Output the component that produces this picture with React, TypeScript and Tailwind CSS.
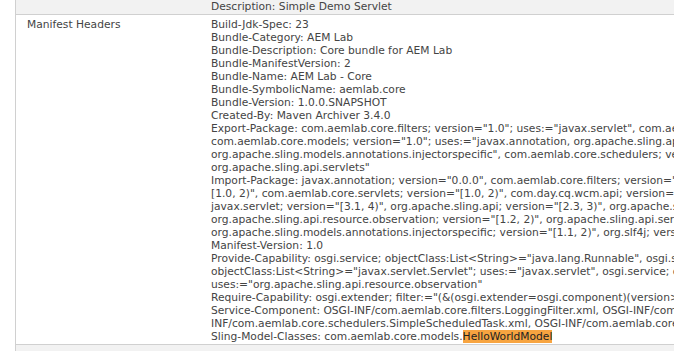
const exportLines = [
	'Export-Package: com.aemlab.core.filters; version="1.0"; uses:="javax.servlet", com.aemlab.core.listeners; version="1.0"; uses:="org.apache.sling.api.resource.observation"',
	'com.aemlab.core.models; version="1.0"; uses:="javax.annotation, org.apache.sling.api.resource, org.apache.sling.models.annotations,',
	'org.apache.sling.models.annotations.injectorspecific", com.aemlab.core.schedulers; version="1.0", com.aemlab.core.servlets; version="1.0"; uses:="javax.servlet,',
	'org.apache.sling.api.servlets"',
];

const importLines = [
	'Import-Package: javax.annotation; version="0.0.0", com.aemlab.core.filters; version="[1.0, 2)", com.aemlab.core.listeners; version=',
	'[1.0, 2)", com.aemlab.core.servlets; version="[1.0, 2)", com.day.cq.wcm.api; version="[1.31, 2)", com.aemlab.core.schedulers;',
	'javax.servlet; version="[3.1, 4)", org.apache.sling.api; version="[2.3, 3)", org.apache.sling.api.resource; version="[2.12, 3)",',
	'org.apache.sling.api.resource.observation; version="[1.2, 2)", org.apache.sling.api.servlets; version="[2.3, 3)",',
	'org.apache.sling.models.annotations.injectorspecific; version="[1.1, 2)", org.slf4j; version="[1.7, 2)"',
];

const provideLines = [
	'Provide-Capability: osgi.service; objectClass:List<String>="java.lang.Runnable", osgi.service; objectClass:List<String>="javax.servlet.Filter";',
	'objectClass:List<String>="javax.servlet.Servlet"; uses:="javax.servlet", osgi.service; objectClass:List<String>="org.apache.sling.api.resource.observation.ResourceChangeListener";',
	'uses:="org.apache.sling.api.resource.observation"',
];

const serviceLines = [
	'Service-Component: OSGI-INF/com.aemlab.core.filters.LoggingFilter.xml, OSGI-INF/com.aemlab.core.listeners.SimpleResourceListener.xml, OSGI-',
	'INF/com.aemlab.core.schedulers.SimpleScheduledTask.xml, OSGI-INF/com.aemlab.core.servlets.SimpleServlet.xml',
];

const lines = [
	"Build-Jdk-Spec: 23",
	"Bundle-Category: AEM Lab",
	"Bundle-Description: Core bundle for AEM Lab",
	"Bundle-ManifestVersion: 2",
	"Bundle-Name: AEM Lab - Core",
	"Bundle-SymbolicName: aemlab.core",
	"Bundle-Version: 1.0.0.SNAPSHOT",
	"Created-By: Maven Archiver 3.4.0",
	...exportLines,
	...importLines,
	"Manifest-Version: 1.0",
	...provideLines,
	'Require-Capability: osgi.extender; filter:="(&(osgi.extender=osgi.component)(version>=1.4.0)(!(version>=2.0.0)))", osgi.ee; filter:="(&(osgi.ee=JavaSE)(version=1.8))"',
	...serviceLines,
];

export default function App() {
	return (
		<div className="w-[674px] h-[351px] overflow-hidden bg-white pl-[15px] text-[10.7px] leading-[13px] text-[#444] font-['DejaVu_Sans',Verdana,sans-serif]">
			<div className="border-l border-[#d0d0d0]">
				{/* previous row, scrolled mostly out of view */}
				<div className="flex h-[15px] bg-[#f2f2f2] border-b border-[#d0d0d0]">
					<div className="w-[195px] shrink-0" />
					<div className="whitespace-nowrap">Description: Simple Demo Servlet</div>
				</div>

				{/* manifest headers */}
				<div className="flex pt-[3px] pb-[1px]">
					<div className="w-[195px] shrink-0 pl-[11px]">Manifest Headers</div>
					<div className="whitespace-nowrap">
						{lines.map((line, i) => (
							<div key={i}>{line}</div>
						))}
						<div>
							Sling-Model-Classes: com.aemlab.core.models.
							<span className="bg-[#f7a440] text-[#222]">HelloWorldModel</span>
						</div>
					</div>
				</div>

				{/* next row */}
				<div className="flex h-[20px] bg-[#f2f2f2] border-t border-[#d0d0d0]">
					<div className="w-[195px] shrink-0 pl-[11px] pt-[5px]">Exported Packages</div>
					<div className="whitespace-nowrap pt-[5px]">com.aemlab.core.filters,version=1.0.0</div>
				</div>
			</div>
		</div>
	);
}
